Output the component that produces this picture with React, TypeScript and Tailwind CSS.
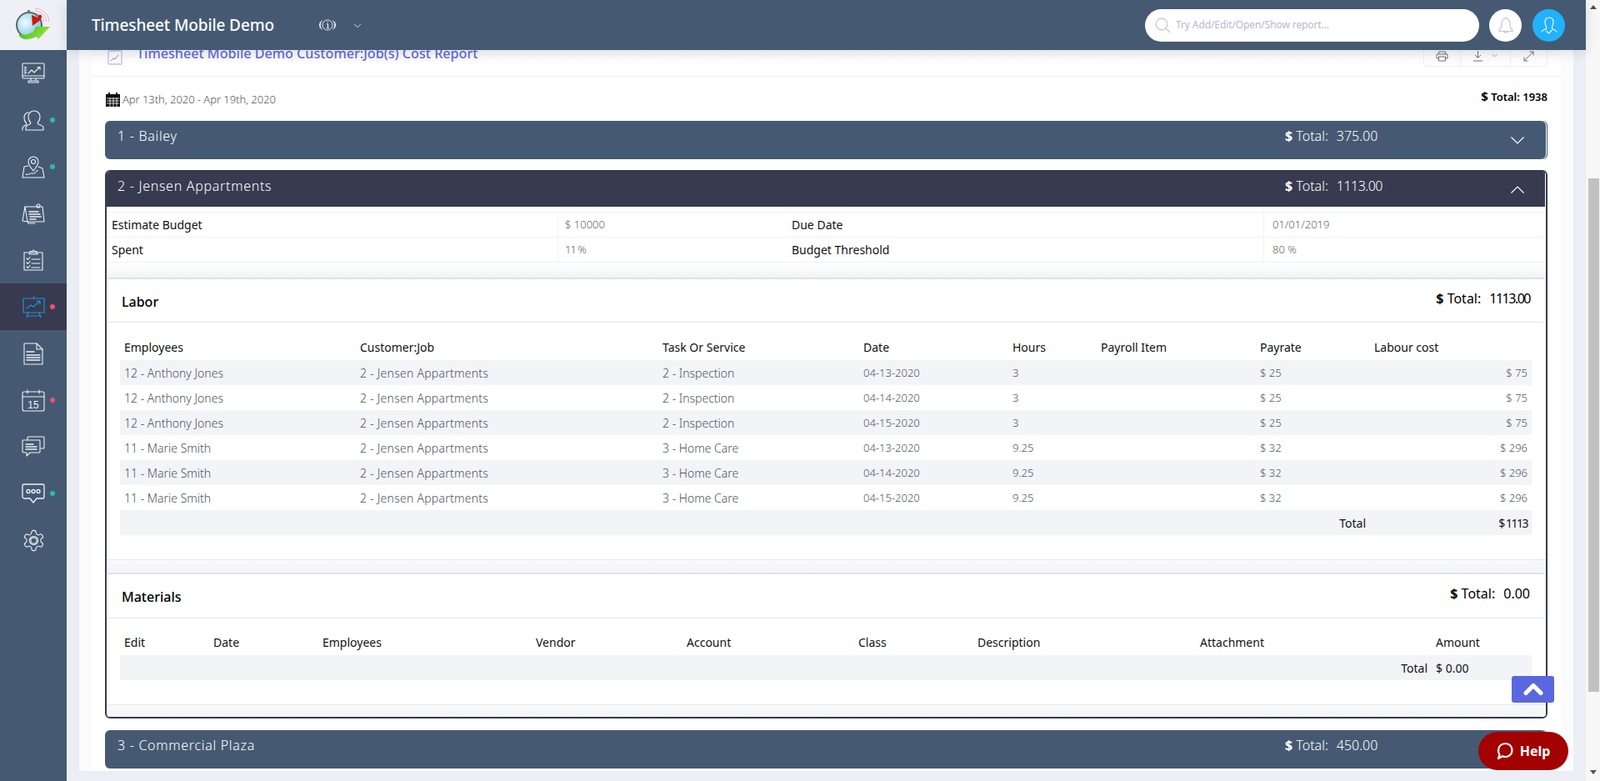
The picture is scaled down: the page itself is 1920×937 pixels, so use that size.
import { ChevronDown, ChevronUp } from "lucide-react";

// Job cost report screen: fixed sidebar + top bar, accordion of customers.

const laborRows = [
  ["12 - Anthony Jones", "2 - Inspection", "04-13-2020", "3", "$ 25", "$ 75"],
  ["12 - Anthony Jones", "2 - Inspection", "04-14-2020", "3", "$ 25", "$ 75"],
  ["12 - Anthony Jones", "2 - Inspection", "04-15-2020", "3", "$ 25", "$ 75"],
  ["11 - Marie Smith", "3 - Home Care", "04-13-2020", "9.25", "$ 32", "$ 296"],
  ["11 - Marie Smith", "3 - Home Care", "04-14-2020", "9.25", "$ 32", "$ 296"],
  ["11 - Marie Smith", "3 - Home Care", "04-15-2020", "9.25", "$ 32", "$ 296"],
];

const laborCols = [283, 363, 241, 179, 106, 191, 137, 194];
const laborHead = ["Employees", "Customer:Job", "Task Or Service", "Date", "Hours", "Payroll Item", "Payrate", "Labour cost"];
const materialCols = [107, 131, 256, 181, 206, 143, 267, 283, 120];
const materialHead = ["Edit", "Date", "Employees", "Vendor", "Account", "Class", "Description", "Attachment", "Amount"];

function Logo() {
  return (
    <svg width="56" height="50" viewBox="0 0 56 50">
      <defs>
        <radialGradient id="face" cx="35%" cy="40%" r="70%">
          <stop offset="0%" stopColor="#f2fbff" />
          <stop offset="100%" stopColor="#6fc3ea" />
        </radialGradient>
        <linearGradient id="arrow" x1="0" y1="0" x2="1" y2="0.4">
          <stop offset="0%" stopColor="#3fb51a" />
          <stop offset="100%" stopColor="#93e53a" />
        </linearGradient>
      </defs>
      <g fill="none" stroke="#e7a5b0" strokeWidth="0.8">
        <path d="M29 5a17 17 0 0 1 17 16" />
        <path d="M29 8a14 14 0 0 1 14 13" />
        <path d="M29 11a11 11 0 0 1 11 10" />
      </g>
      <circle cx="22" cy="25" r="15" fill="url(#face)" stroke="#5f666b" strokeWidth="2" />
      <rect x="20" y="7" width="3" height="3" fill="#777" />
      <path d="M25 13 L37 18 L26 26 Z" fill="#d2140e" />
      <circle cx="35" cy="15" r="2.200" fill="#c9151c" />
      <path d="M10 35C15 38 21 37 27 33L30 27 47 27 33 42 30 38C26 42 15 45 10 38z" fill="url(#arrow)" />
    </svg>
  );
}

function SideIcon({ index }: { index: number }) {
  const common = {
    fill: "none",
    stroke: "#eef1f5",
    strokeWidth: 1.1,
    strokeLinejoin: "round" as const,
    strokeLinecap: "round" as const,
  };
  switch (index) {
    case 0:
      return (
        <svg width="28" height="26" viewBox="0 0 28 26" {...common}>
          <rect x="1" y="1" width="26" height="18" rx="1" />
          <path d="M1 16h26M11 19v3M17 19v3M8 24h12v-2H8z" />
          <path d="M4 5v9M4 6h2M4 9h2M4 12h2" />
          <path d="M8 13l4-4 3 3 6-6M19 5.500h3v3" />
        </svg>
      );
    case 1:
      return (
        <svg width="28" height="26" viewBox="0 0 28 26" {...common}>
          <path d="M5 25v-3c0-2 2-3 5-4 1-1 1-2 0-3-2-2-2-4-2-6 0-4 3-7 7-7s7 3 7 7c0 2 0 4-2 6-1 1-1 2 0 3 3 1 6 2 6 4v3z" />
          <path d="M1 25v-2c0-2 2-3 4-4 1-1 1-2 0-3-2-2-2-4-2-6 0-3 2-6 5-6" />
        </svg>
      );
    case 2:
      return (
        <svg width="28" height="27" viewBox="0 0 28 27" {...common}>
          <path d="M14 18c-3-4-6-7-6-11a6 6 0 0 1 12 0c0 4-3 7-6 11z" />
          <circle cx="14" cy="7" r="2.500" />
          <path d="M8 12l-5 1-2 13h26l-2-11-5-2" />
          <path d="M5 22c3 2 5-2 8-1s3-2 7-4" strokeDasharray="2 1.500" />
        </svg>
      );
    case 3:
      return (
        <svg width="28" height="25" viewBox="0 0 28 25" {...common}>
          <path d="M4 4h21l2 18H7z" />
          <path d="M4 4L1 21l6 1M7 22l1 2h8" />
          <path d="M9 10h11M9 13h13M10 16h13M10 19h7" strokeWidth="1.600" />
          <circle cx="20" cy="3" r="2" />
        </svg>
      );
    case 4:
      return (
        <svg width="24" height="26" viewBox="0 0 24 26" {...common}>
          <rect x="1" y="4" width="22" height="21" />
          <path d="M8 4V2.500h3L12 1l1 1.500h3V4l1 2H7z" />
          <path d="M4 11l1.500 1.500L8 9.500M4 16l1.500 1.500L8 14.500M4 21l1.500 1.500L8 19.500" />
          <path d="M10 12h10M10 17h10M10 22h10" />
        </svg>
      );
    case 5:
      return (
        <svg width="27" height="27" viewBox="0 0 27 27" {...common} stroke="#1f92d6" strokeWidth="1.200">
          <rect x="1" y="3" width="25" height="17" />
          <path d="M13.500 1v2M7 20l-2 6M20 20l2 6M6 24h15" />
          <path d="M5 15l5-4 3 2 8-7M17 6h4v4" />
        </svg>
      );
    case 6:
      return (
        <svg width="24" height="27" viewBox="0 0 24 27" {...common}>
          <path d="M1 1h15l7 7v18H1z" />
          <path d="M16 1v7h7" />
          <path d="M4 11h9M4 15h16M4 18h16M4 21h16" strokeWidth="1.400" />
        </svg>
      );
    case 7:
      return (
        <svg width="28" height="27" viewBox="0 0 28 27" {...common}>
          <rect x="1" y="3" width="26" height="23" rx="2" />
          <path d="M1 9h26M7 1v4M21 1v4" />
          <text x="14" y="22.500" textAnchor="middle" fontSize="12" fill="#eef1f5" stroke="none" fontFamily="'Liberation Sans', sans-serif">15</text>
        </svg>
      );
    case 8:
      return (
        <svg width="28" height="26" viewBox="0 0 28 26" {...common}>
          <path d="M7 5V2a1 1 0 0 1 1-1h18a1 1 0 0 1 1 1v12a1 1 0 0 1-1 1h-3" />
          <path d="M2 5h19a1 1 0 0 1 1 1v13a1 1 0 0 1-1 1H10l-4 4v-4H2a1 1 0 0 1-1-1V6a1 1 0 0 1 1-1z" />
          <path d="M5 10h9M5 13h13M5 16h13" strokeWidth="1.400" />
        </svg>
      );
    case 9:
      return (
        <svg width="28" height="25" viewBox="0 0 28 25" {...common} strokeWidth="1.300">
          <path d="M3 1h22a2 2 0 0 1 2 2v13a2 2 0 0 1-2 2h-7l-4 5-4-5H3a2 2 0 0 1-2-2V3a2 2 0 0 1 2-2z" />
          <circle cx="8" cy="9.500" r="2" />
          <circle cx="14" cy="9.500" r="2" />
          <circle cx="20" cy="9.500" r="2" />
        </svg>
      );
    default:
      return (
        <svg width="29" height="29" viewBox="0 0 24 24" {...common} strokeWidth="0.900">
          <path d="M12.220 2h-.44a2 2 0 0 0-2 2v.18a2 2 0 0 1-1 1.730l-.43.25a2 2 0 0 1-2 0l-.15-.08a2 2 0 0 0-2.730.73l-.22.38a2 2 0 0 0 .73 2.730l.15.1a2 2 0 0 1 1 1.720v.51a2 2 0 0 1-1 1.740l-.15.09a2 2 0 0 0-.73 2.730l.22.38a2 2 0 0 0 2.730.73l.15-.08a2 2 0 0 1 2 0l.43.25a2 2 0 0 1 1 1.730V20a2 2 0 0 0 2 2h.44a2 2 0 0 0 2-2v-.18a2 2 0 0 1 1-1.730l.43-.25a2 2 0 0 1 2 0l.15.08a2 2 0 0 0 2.730-.73l.22-.39a2 2 0 0 0-.73-2.730l-.15-.08a2 2 0 0 1-1-1.740v-.5a2 2 0 0 1 1-1.740l.15-.09a2 2 0 0 0 .73-2.730l-.22-.38a2 2 0 0 0-2.730-.73l-.15.08a2 2 0 0 1-2 0l-.43-.25a2 2 0 0 1-1-1.730V4a2 2 0 0 0-2-2z" />
          <circle cx="12" cy="12" r="4.200" />
          <circle cx="12" cy="12" r="3" />
        </svg>
      );
  }
}

const dots: Record<number, string> = {
  1: "bg-[#2fbd9b]",
  2: "bg-[#2fbd9b]",
  5: "bg-[#f0506e]",
  7: "bg-[#f0506e]",
  9: "bg-[#2fbd9b]",
};

function Sidebar() {
  return (
    <aside className="flex w-20 shrink-0 flex-col bg-[#455a72]">
      <div className="flex h-[60px] items-center justify-center bg-[#eff0f6] pl-px">
        <Logo />
      </div>
      {Array.from({ length: 11 }).map((_, i) => (
        <div
          key={i}
          className={`relative flex h-14 items-center justify-center ${i === 5 ? "bg-[#383a4f]" : ""}`}
        >
          <SideIcon index={i} />
          {dots[i] && <span className={`absolute left-[60px] top-[25px] h-1.5 w-1.5 rounded-full ${dots[i]}`} />}
        </div>
      ))}
    </aside>
  );
}

function TopBar() {
  return (
    <header className="relative z-10 flex h-[60px] shrink-0 items-center bg-[#455a72] pl-[30px] shadow-[0_3px_14px_rgba(0,0,0,0.12)]">
      <h1 className="w-[273px] text-[19px] font-medium tracking-[-0.1px] text-white">Timesheet Mobile Demo</h1>
      <svg width="20" height="18" viewBox="0 0 20 18" fill="none" stroke="#e6eaf0" strokeWidth="1">
        <circle cx="10" cy="9" r="6" />
        <path d="M3.500 3.500a8 8 0 0 0 0 11M16.500 3.500a8 8 0 0 1 0 11M1.500 5a8 8 0 0 0 0 8M18.500 5a8 8 0 0 1 0 8" />
        <path d="M10 5.500v1M8.800 8h1.700v4.500M8.800 12.500h3" strokeWidth="1.200" />
      </svg>
      <ChevronDown className="ml-[19px] mt-0.5 h-[14px] w-[14px] text-[#e6eaf0]" strokeWidth={1.5} />
      <div className="ml-auto flex h-[39px] w-[401px] items-center rounded-full bg-white pl-3">
        <svg width="19" height="19" viewBox="0 0 19 19" fill="none" stroke="#c3c6d4" strokeWidth="1.200">
          <circle cx="8" cy="8" r="6.800" />
          <path d="M13 13l5 5" />
        </svg>
        <span className="ml-[6px] text-[12px] tracking-[-0.1px] text-[#b7b7cf]">Try Add/Edit/Open/Show report...</span>
      </div>
      <div className="ml-3 flex h-[39px] w-[39px] items-center justify-center rounded-full bg-white">
        <svg width="18" height="21" viewBox="0 0 18 21" fill="none" stroke="#c4c3d6" strokeWidth="1.200" strokeLinejoin="round">
          <path d="M9 1a1.500 1.500 0 0 1 1.500 1.500C13 3.500 14 6 14 9c0 3 1.500 6 3 7.500v1H1v-1C2.500 15 4 12 4 9c0-3 1-5.500 3.500-6.500A1.500 1.500 0 0 1 9 1z" />
          <path d="M7 18c.5 1.500 3.500 1.500 4 0" />
        </svg>
      </div>
      <div className="ml-[13px] mr-[25px] flex h-[39px] w-[39px] items-center justify-center rounded-full bg-[#22b2fb]">
        <svg width="20" height="24" viewBox="0 0 20 24" fill="none" stroke="#ffffff" strokeWidth="1.100" strokeLinecap="round">
          <path d="M6 17c-2 .5-4 1.500-5 3M14 17c2 .5 4 1.500 5 3" />
          <path d="M6 17c1-1.500 1-2.500 0-4-1-1.500-1-3-1-5a5 5 0 0 1 10 0c0 2 0 3.500-1 5-1 1.500-1 2.500 0 4" />
          <path d="M7 19.500l2.500 2.500 3.500-3.500" />
        </svg>
      </div>
    </header>
  );
}

function TotalLabel({ amount, className, amountClass = "" }: { amount: string; className: string; amountClass?: string }) {
  return (
    <span className={className}>
      <b className="font-bold">$</b> Total:
      <span className={`ml-[10px] ${amountClass}`}>{amount}</span>
    </span>
  );
}

function Caret({ up }: { up?: boolean }) {
  return (
    <svg width="16" height="9" viewBox="0 0 16 9" fill="none" stroke="#ffffff" strokeWidth="1.200">
      <path d={up ? "M.5 8.500L8 1l7.500 7.500" : "M.5.5L8 8 15.500.5"} />
    </svg>
  );
}

function JobHeader({ title, amount, open }: { title: string; amount: string; open?: boolean }) {
  if (open) {
    return (
      <div className="flex h-[42px] items-center bg-[#383a4f] pl-[13px] text-white shadow-[inset_-1px_0_0_#ffffff]">
        <span className="flex-1 pb-[9px] text-[16px] font-light tracking-[0.7px]">{title}</span>
        <TotalLabel amount={amount} amountClass="tracking-[-0.5px]" className="w-[271px] pb-[9px] text-[16px] font-light" />
        <div className="mr-[26px] flex">
          <Caret up />
        </div>
      </div>
    );
  }
  return (
    <div className="flex h-[46px] items-center rounded-md bg-[#455a72] pl-[15px] text-white shadow-[inset_-1px_0_0_#455a72,inset_-2px_0_0_#ffffff]">
      <span className="flex-1 pb-[11px] text-[16px] font-light tracking-[0.7px]">{title}</span>
      <TotalLabel amount={amount} className="w-[271px] pb-[11px] text-[16px] font-light" />
      <div className="mr-[28px] flex">
        <Caret />
      </div>
    </div>
  );
}

function InfoTable() {
  const rows = [
    ["Estimate Budget", "$ 10000", "Due Date", "01/01/2019"],
    ["Spent", "11 %", "Budget Threshold", "80 %"],
  ];
  return (
    <div>
      <div className="h-[7px] border-b border-[#eff0f3]" />
      {rows.map((r) => (
        <div key={r[0]} className="grid h-[30px] grid-cols-[541px_273px_574px_339px] border-b border-[#eff0f3] text-[14px] leading-[29px]">
          <div className="pl-[6px] text-[#111]">{r[0]}</div>
          <div className={`border-l border-[#f2f3f5] pl-[8px] text-[13px] font-light text-[#666] ${r[1] === "11 %" ? "tracking-[-1px]" : ""}`}>{r[1]}</div>
          <div className="pl-[8px] text-[#111]">{r[2]}</div>
          <div className="border-l border-[#f2f3f5] pl-[10px] text-[13px] font-light text-[#666]">{r[3]}</div>
        </div>
      ))}
      <div className="h-[18px] bg-linear-to-b from-white to-[#f3f4f6]" />
    </div>
  );
}

function SectionHead({ title, amount, amountClass }: { title: string; amount: string; amountClass?: string }) {
  return (
    <div className="mx-px flex h-[54px] justify-between border-x border-t-2 border-b border-[#eceef2] border-t-[#dfe2e8] border-b-[#e4e5ed] bg-white pl-[16px] pr-[17px]">
      <h3 className="self-center pt-[2px] text-[16px] font-medium text-black">{title}</h3>
      <TotalLabel amount={amount} amountClass={amountClass} className="pt-[11px] text-[16px] text-black" />
    </div>
  );
}

function LaborTable() {
  return (
    <table className="ml-4 w-[1694px] table-fixed border-collapse text-[14px]">
      <colgroup>
        {laborCols.map((w, i) => (
          <col key={i} style={{ width: w }} />
        ))}
      </colgroup>
      <thead>
        <tr className="h-[45px]">
          {laborHead.map((h) => (
            <th key={h} className="pb-[5px] pl-[5px] text-left align-bottom font-normal text-[#111]">
              {h}
            </th>
          ))}
        </tr>
      </thead>
      <tbody className="font-light text-[#4f5260]">
        {laborRows.map((r, i) => (
          <tr key={i} className={`h-[30px] ${i % 2 === 0 ? "bg-[#f3f4f8]" : ""}`}>
            <td className="pl-[5px]">{r[0]}</td>
            <td className="pl-[5px] tracking-[0.25px]">2 - Jensen Appartments</td>
            <td className="pl-[5px]">{r[1]}</td>
            <td className="pl-[5px] pt-[1px] text-[13px]">{r[2]}</td>
            <td className="pl-[5px] pt-[1px] text-[13px]">{r[3]}</td>
            <td />
            <td className="pl-[5px] pt-[1px] text-[13px]">{r[4]}</td>
            <td className="pr-[5px] pt-[1px] text-right text-[13px]">{r[5]}</td>
          </tr>
        ))}
        <tr className="h-[30px] bg-[#f3f4f8] font-normal text-[#111]">
          <td colSpan={7} className="pr-[5px] text-right">
            Total
          </td>
          <td className="pr-[5px] text-right tracking-[-1.5px]">$ 1113</td>
        </tr>
      </tbody>
    </table>
  );
}

function MaterialsTable() {
  return (
    <table className="ml-4 w-[1694px] table-fixed border-collapse text-[14px]">
      <colgroup>
        {materialCols.map((w, i) => (
          <col key={i} style={{ width: w }} />
        ))}
      </colgroup>
      <thead>
        <tr className="h-[44px]">
          {materialHead.map((h) => (
            <th key={h} className="pb-[5px] pl-[5px] text-left align-bottom font-normal text-[#111]">
              {h}
            </th>
          ))}
        </tr>
      </thead>
      <tbody className="text-[#111]">
        <tr className="h-[30px] bg-[#f3f4f8]">
          <td colSpan={8} className="pr-[5px] text-right">
            Total
          </td>
          <td className="pl-[5px]">$ 0.00</td>
        </tr>
      </tbody>
    </table>
  );
}

function OpenJob() {
  return (
    <div className="mt-[13px] overflow-hidden rounded-md border-2 border-[#383a4f]">
      <JobHeader title="2 - Jensen Appartments" amount="1113.00" open />
      <InfoTable />
      <SectionHead title="Labor" amount="1113.00" amountClass="tracking-[-1.5px]" />
      <LaborTable />
      <div className="h-[30px] border-b border-[#e7e8ec]" />
      <div className="h-[15px] bg-linear-to-b from-[#f9f9fa] to-[#f3f4f6]" />
      <div className="[&>div:first-child]:h-[55px]">
        <SectionHead title="Materials" amount="0.00" />
      </div>
      <MaterialsTable />
      <div className="h-[30px] border-b border-[#e7e8ec]" />
      <div className="h-[14px] bg-linear-to-b from-[#f9f9fa] to-[#f3f4f6]" />
    </div>
  );
}

function ReportTitle() {
  return (
    <div className="-mt-3 flex h-[44px] items-start border-b border-[#eeeff2] bg-linear-to-b from-[#f3f4f6] to-white to-70% pl-[18px] pr-[16px]">
      <svg className="mt-[12px]" width="18" height="18" viewBox="0 0 18 18" fill="none">
        <rect x="1" y="1" width="16" height="16" rx="1" stroke="#c8b8ee" strokeWidth="1.300" />
        <path d="M4 13l3-3 2 1 4-5" stroke="#8d86cf" strokeWidth="1" />
      </svg>
      <h2 className="ml-[17px] mt-[4px] text-[16.150px] font-medium leading-[24px] text-[#5f6be2]">
        Timesheet Mobile Demo Customer:Job(s) Cost Report
      </h2>
      <div className="ml-auto mt-[8px] flex h-[24px] w-[149px] rounded-b border border-t-0 border-[#eceef2] text-[#6a7280]">
        <div className="flex w-[44px] items-start justify-center border-r border-[#eceef2]">
          <svg width="15" height="13" viewBox="0 0 15 13" fill="none" stroke="currentColor" strokeWidth="1" className="mt-[5px]">
            <path d="M3.500 4V1h8v3M3.500 9H1V4h13v5h-2.500M3.500 7h8v5h-8z" />
          </svg>
        </div>
        <div className="flex w-[60px] items-start justify-center gap-[8px] border-r border-[#eceef2] pt-[5px]">
          <svg width="13" height="13" viewBox="0 0 13 13" fill="none" stroke="currentColor" strokeWidth="1">
            <path d="M6.500 0v8M3 5l3.500 3.500L10 5M1 12h11" />
          </svg>
          <ChevronDown className="h-[11px] w-[11px]" strokeWidth={1.3} />
        </div>
        <div className="flex flex-1 items-start justify-center pt-[5px]">
          <svg width="13" height="13" viewBox="0 0 13 13" fill="none" stroke="currentColor" strokeWidth="1">
            <path d="M1 12L12 1M7.500 1H12v4.500M1 7.500V12h4.500" />
          </svg>
        </div>
      </div>
    </div>
  );
}

function Content() {
  return (
    <div className="flex-1 overflow-hidden bg-[#eceef5] pl-[15px] pr-[15px]">
      <div className="h-full bg-[#fbfbfd] pl-4 pr-[15px]">
        <div className="h-full bg-white">
          <ReportTitle />
          <div className="pl-[15px] pr-4">
            <div className="flex h-[53px] items-start justify-between">
              <div className="ml-px mt-[18px] flex items-center">
                <svg width="17" height="17" viewBox="0 0 17 17">
                  <rect x="0" y="2" width="17" height="15" fill="#111" />
                  <rect x="3" y="0" width="2" height="4" fill="#111" />
                  <rect x="12" y="0" width="2" height="4" fill="#111" />
                  <path d="M1 7h15M1 10h15M1 13h15M5 6v11M9 6v11M13 6v11" stroke="#fff" strokeWidth="0.800" />
                </svg>
                <span className="ml-[3px] text-[13px] font-light tracking-[-0.05px] text-[#555]">Apr 13th, 2020 - Apr 19th, 2020</span>
              </div>
              <div className="mt-[12px] text-[13px] font-semibold text-black">
                <b className="text-[15px] font-bold">$</b> Total: 1938
              </div>
            </div>
            <JobHeader title="1 - Bailey" amount="375.00" />
            <OpenJob />
            <div className="mt-[14px]">
              <JobHeader title="3 - Commercial Plaza" amount="450.00" />
            </div>
          </div>
        </div>
      </div>
    </div>
  );
}

function ScrollBar() {
  return (
    <div className="flex w-[17px] shrink-0 flex-col items-center bg-[#f7f7f8]">
      <div className="mt-[6px] h-0 w-0 border-x-[4px] border-b-[5px] border-x-transparent border-b-[#505050]" />
      <div className="mt-[203px] ml-[2px] h-[616px] w-[13px] bg-[#c1c1c1]" />
      <div className="mt-[94px] h-0 w-0 border-x-[4px] border-t-[5px] border-x-transparent border-t-[#505050]" />
    </div>
  );
}

export default function App() {
  return (
    <div className="relative flex h-[937px] w-[1920px] overflow-hidden bg-white font-['Inter',sans-serif]">
      <Sidebar />
      <main className="flex min-w-0 flex-1 flex-col">
        <TopBar />
        <Content />
      </main>
      <ScrollBar />
      <button className="absolute left-[1814px] top-[811px] flex h-[32px] w-[51px] items-center justify-center rounded-[3px] bg-[#5b67e0] text-white">
        <ChevronUp className="h-[36px] w-[36px]" strokeWidth={3.5} />
      </button>
      <button className="absolute left-[1774px] top-[878px] flex h-[46px] w-[108px] items-center justify-center gap-[8px] rounded-full bg-[#a30000] text-[16px] font-bold text-white">
        <svg width="20" height="22" viewBox="0 0 20 22" fill="none" stroke="#ffffff" strokeWidth="2.200" strokeLinejoin="round">
          <path d="M10.500 2c4.500 0 8 3.400 8 8s-3.500 8-8 8c-1.500 0-2.500-.3-3.500-.8L2 20l1.500-4.500C2.500 14 2 12 2 10c0-4.600 4-8 8.500-8z" />
        </svg>
        Help
      </button>
    </div>
  );
}
